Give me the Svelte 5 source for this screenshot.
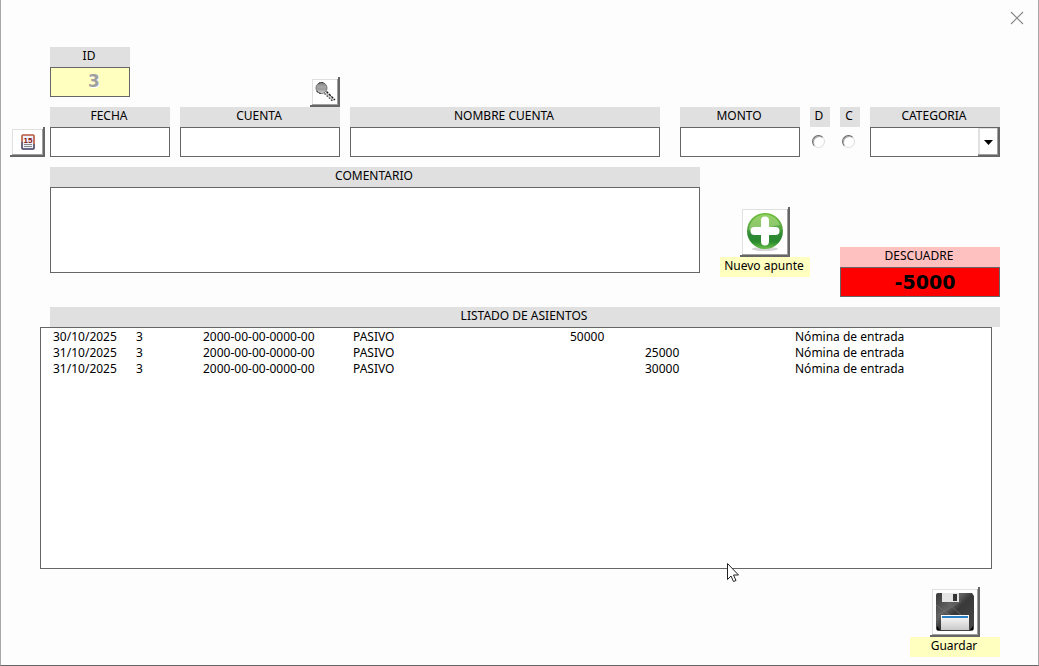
<script lang="ts">
	type Entry = {
		date: string;
		id: number;
		account: string;
		name: string;
		debit: string;
		credit: string;
		comment: string;
	};

	const entries: Entry[] = [
		{ date: '30/10/2025', id: 3, account: '2000-00-00-0000-00', name: 'PASIVO', debit: '50000', credit: '', comment: 'Nómina de entrada' },
		{ date: '31/10/2025', id: 3, account: '2000-00-00-0000-00', name: 'PASIVO', debit: '', credit: '25000', comment: 'Nómina de entrada' },
		{ date: '31/10/2025', id: 3, account: '2000-00-00-0000-00', name: 'PASIVO', debit: '', credit: '30000', comment: 'Nómina de entrada' },
	];

	let fecha = $state('');
	let cuenta = $state('');
	let nombre = $state('');
	let monto = $state('');
	let tipo = $state('');
	let categoria = $state('');
	let comentario = $state('');
</script>

<main class="window">
	<header>
		<button class="close" type="button" aria-label="Cerrar">
			<svg width="14" height="14" viewBox="0 0 14 14">
				<path d="M1 1L13 13M13 1L1 13" stroke="#858585" stroke-width="1.1" />
			</svg>
		</button>
	</header>

	<section class="fields">
		<div class="field id">
			<label for="id">ID</label>
			<input id="id" value="3" readonly />
		</div>

		<button class="raised search" type="button" aria-label="Buscar cuenta">
			<svg width="22" height="22" viewBox="0 0 22 22">
				<defs>
					<linearGradient id="lens" x1="0" y1="0" x2="0" y2="1">
						<stop offset="0" stop-color="#808080" />
						<stop offset="0.4" stop-color="#a8a8a8" />
						<stop offset="0.6" stop-color="#999" />
						<stop offset="1" stop-color="#dcdcdc" />
					</linearGradient>
				</defs>
				<path d="M11 12.5L12.500 11L20.500 18.500L19 20.500Z" fill="#c8c8c8" />
				<path d="M12.500 10.500L21 19" stroke="#111" stroke-width="1.2" stroke-dasharray="2.5 1" />
				<path d="M10.500 12.500L19 20.500" stroke="#333" stroke-width="1.2" stroke-dasharray="1.5 1.5" />
				<circle cx="7.500" cy="7" r="5.500" fill="url(#lens)" stroke="#777" />
				<path d="M4.500 2.500Q7.500 0.500 10.500 2.500M2.500 10Q4.500 12.500 7.500 12.500" stroke="#222" fill="none" stroke-dasharray="2 1" />
			</svg>
		</button>

		<button class="raised calendar" type="button" aria-label="Elegir fecha">
			<svg width="14" height="16" viewBox="0 0 14 16">
				<rect x="1" y="1" width="12" height="14" rx="1" fill="#edf3fa" stroke="#b8563c" stroke-width="1.6" />
				<path d="M1 8V14Q1 15 2 15H12Q13 15 13 14V10" fill="none" stroke="#4a5c8c" stroke-width="1.4" />
				<text x="7" y="8.5" text-anchor="middle">15</text>
				<path d="M3 10.500H11M3 12.500H11" stroke="#888" />
			</svg>
		</button>

		<div class="field">
			<label for="fecha">FECHA</label>
			<input id="fecha" bind:value={fecha} />
		</div>
		<div class="field">
			<label for="cuenta">CUENTA</label>
			<input id="cuenta" bind:value={cuenta} />
		</div>
		<div class="field nombre">
			<label for="nombre">NOMBRE CUENTA</label>
			<input id="nombre" bind:value={nombre} />
		</div>
		<div class="field">
			<label for="monto">MONTO</label>
			<input id="monto" bind:value={monto} />
		</div>
		<div class="option">
			<label for="debe">D</label>
			<input id="debe" type="radio" name="tipo" value="D" bind:group={tipo} />
		</div>
		<div class="option">
			<label for="credito">C</label>
			<input id="credito" type="radio" name="tipo" value="C" bind:group={tipo} />
		</div>
		<div class="field">
			<label for="categoria">CATEGORIA</label>
			<div class="combo">
				<select id="categoria" bind:value={categoria}>
					<option value=""></option>
				</select>
				<span class="arrow">
					<svg width="9" height="5" viewBox="0 0 9 5"><path d="M0 0H9L4.5 5Z" /></svg>
				</span>
			</div>
		</div>
	</section>

	<section class="middle">
		<div class="field comment">
			<label for="comentario">COMENTARIO</label>
			<textarea id="comentario" bind:value={comentario}></textarea>
		</div>

		<div class="action new">
			<button class="raised" type="button" aria-labelledby="new-label">
				<svg width="38" height="40" viewBox="0 0 38 40">
					<defs>
						<linearGradient id="green" x1="0" y1="0" x2="0" y2="1">
							<stop offset="0" stop-color="#6fbf3a" />
							<stop offset="0.4" stop-color="#5aa845" />
							<stop offset="0.6" stop-color="#2f8a35" />
							<stop offset="0.8" stop-color="#2a8a2c" />
							<stop offset="1" stop-color="#6cc04c" />
						</linearGradient>
					</defs>
					<ellipse cx="19" cy="37" rx="13" ry="2" fill="#d5d5d5" />
					<circle cx="19" cy="19" r="18" fill="url(#green)" />
					<path d="M3 18A16 16 0 0 1 34 13Q25 14 19 18T3 18Z" fill="#c8eba0" opacity="0.45" />
					<path d="M19 8.500V29.500M8.500 19H29.500" stroke="#fff" stroke-width="8" stroke-linecap="round" />
				</svg>
			</button>
			<span id="new-label">Nuevo apunte</span>
		</div>

		<div class="field balance">
			<label for="descuadre">DESCUADRE</label>
			<input id="descuadre" value="-5000" readonly />
		</div>
	</section>

	<section class="list">
		<h2>LISTADO DE ASIENTOS</h2>
		<div class="list-box">
			<table>
				<colgroup>
					<col class="c-date" />
					<col class="c-id" />
					<col class="c-account" />
					<col class="c-name" />
					<col class="c-debit" />
					<col class="c-credit" />
					<col />
				</colgroup>
				<tbody>
					{#each entries as entry}
						<tr>
							<td>{entry.date}</td>
							<td>{entry.id}</td>
							<td>{entry.account}</td>
							<td>{entry.name}</td>
							<td>{entry.debit}</td>
							<td>{entry.credit}</td>
							<td>{entry.comment}</td>
						</tr>
					{/each}
				</tbody>
			</table>
		</div>
	</section>

	<footer>
		<div class="action">
			<button class="raised" type="button" aria-labelledby="save-label">
				<svg width="38" height="38" viewBox="0 0 38 38">
					<defs>
						<linearGradient id="disk" x1="0" y1="0" x2="1" y2="1">
							<stop offset="0" stop-color="#3a3a3a" />
							<stop offset="0.35" stop-color="#626262" />
							<stop offset="0.5" stop-color="#393939" />
							<stop offset="1" stop-color="#484848" />
						</linearGradient>
						<linearGradient id="paper" x1="0" y1="0" x2="0" y2="1">
							<stop offset="0" stop-color="#fff" />
							<stop offset="1" stop-color="#c9c9c9" />
						</linearGradient>
					</defs>
					<path d="M2 0H36L38 3V35Q38 38 35 38H3Q0 38 0 35V2Q0 0 2 0Z" fill="url(#disk)" />
					<path d="M0 12L16 24M2 22L25 8M12 10L25 22" stroke="#727272" stroke-width="0.7" />
					<rect x="6" y="0" width="17" height="9" fill="#e5e5e5" />
					<rect x="17" y="1" width="4" height="7" fill="#333" />
					<rect x="5" y="22" width="28" height="15" fill="url(#paper)" />
					<path d="M6 24H32" stroke="#2b7fc4" stroke-width="2" />
					<path d="M1 33L4 37H1ZM37 33L34 37H37Z" fill="#000" />
				</svg>
			</button>
			<span id="save-label">Guardar</span>
		</div>
	</footer>

	<svg class="cursor" width="12" height="19" viewBox="0 0 12 19">
		<path d="M0.500 0.500V16.500L4 13L6.500 18.500L9 17.500L6.500 12H11.500Z" fill="#fff" stroke="#222" />
	</svg>
</main>

<style>
	:global(body) {
		margin: 0;
		background: #fdfdfd;
	}

	.window,
	.window * {
		box-sizing: border-box;
	}

	.window {
		position: relative;
		display: flex;
		flex-direction: column;
		min-height: 100vh;
		padding: 0 38px 8px 9px;
		border: 1px solid #a8a8a8;
		border-top: 0;
		border-bottom-color: #666;
		background: #fdfdfd;
		color: #000;
		font: 12px/16px 'Noto Sans', sans-serif;
	}

	header {
		display: flex;
		justify-content: flex-end;
		height: 47px;
		margin-right: -27px;
		padding-top: 8px;
	}

	.close {
		display: grid;
		place-items: center;
		width: 20px;
		height: 20px;
		padding: 0;
		border: 0;
		background: none;
	}

	.fields {
		display: grid;
		grid-template-columns: 30px 120px 160px 1fr 120px 20px 20px 130px;
		grid-template-rows: 60px 50px;
		column-gap: 10px;
	}

	.field {
		display: flex;
		flex-direction: column;
		min-width: 0;
	}

	label,
	h2,
	.action span {
		display: block;
		height: 20px;
		margin: 0;
		padding: 0 2px 2px 0;
		background: #e0e0e0;
		font-size: 12px;
		font-weight: normal;
		line-height: 18px;
		text-align: center;
	}

	.field input,
	select,
	textarea {
		width: 100%;
		height: 30px;
		margin: 0;
		padding: 0 4px;
		border: 1px solid #666;
		border-radius: 0;
		outline: 0;
		background: #fff;
		color: #000;
		font: inherit;
	}

	textarea {
		display: block;
		height: 86px;
		resize: none;
	}

	.id {
		grid-column: 2;
		width: 80px;
	}

	.id input {
		padding: 0 4px 2px 12px;
		background: #ffffc0;
		color: #a0a0a0;
		font: bold 17px 'DejaVu Sans', sans-serif;
		text-align: center;
		text-shadow: 1px 1px 0 #fff;
	}

	.raised {
		display: grid;
		place-items: center;
		width: 50px;
		height: 50px;
		padding: 0;
		border: 0;
		background: #fff;
		box-shadow:
			inset -2px -2px 0 #666,
			inset 2px 2px 0 #fdfdfd,
			inset -3px -3px 0 #a0a0a0,
			inset 3px 3px 0 #e0e0e0;
	}

	.search {
		grid-column: 3;
		align-self: end;
		justify-self: end;
		width: 30px;
		height: 30px;
	}

	.calendar {
		grid-column: 1;
		align-self: end;
		width: 35px;
		height: 30px;
	}

	.calendar text {
		fill: #8b1010;
		font: bold 8px 'Liberation Sans', sans-serif;
	}

	.nombre {
		margin-right: 10px;
	}

	.option {
		display: flex;
		flex-direction: column;
	}

	.option input {
		appearance: none;
		width: 13px;
		height: 13px;
		margin: 8px 0 0 2px;
		border: 1px solid;
		border-color: #666 #ddd #ddd #666;
		border-radius: 50%;
		background: #fff;
		box-shadow: inset 1px 1px 0 #aaa;
	}

	.option input:checked {
		background: radial-gradient(#000 0 2px, #fff 3px);
	}

	.combo {
		position: relative;
	}

	select {
		display: block;
		appearance: none;
	}

	.arrow {
		position: absolute;
		top: 1px;
		right: 0;
		bottom: 0;
		display: grid;
		place-items: center;
		width: 22px;
		padding-right: 2px;
		background: #fff;
		box-shadow:
			inset -2px -2px 0 #666,
			inset -3px -3px 0 #a0a0a0,
			inset 2px 1px 0 #e0e0e0;
		pointer-events: none;
	}

	.middle {
		display: flex;
		align-items: flex-end;
		height: 130px;
		margin: 10px 0 10px 40px;
	}

	.comment {
		flex: 1;
		align-self: flex-start;
	}

	.action {
		width: 90px;
	}

	.action .raised {
		margin-left: 20px;
	}

	.action span {
		background: #ffffc0;
	}

	.new {
		margin: 0 30px 20px 20px;
	}

	.balance {
		width: 160px;
	}

	.balance label {
		background: #ffc0c0;
	}

	.balance input {
		padding-left: 14px;
		background: #f00;
		font: bold 19px 'DejaVu Sans', sans-serif;
		text-align: center;
	}

	.list {
		display: flex;
		flex: 1;
		flex-direction: column;
	}

	h2 {
		margin-left: 40px;
	}

	.list-box {
		flex: 1;
		margin: 0 8px 0 30px;
		padding: 1px 0 0 9px;
		border: 1px solid #666;
		background: #fff;
	}

	table {
		width: 100%;
		border-collapse: collapse;
		table-layout: fixed;
	}

	td {
		height: 16px;
		padding: 0 0 0 3px;
		white-space: nowrap;
	}

	.c-date {
		width: 83px;
	}

	.c-id {
		width: 67px;
	}

	.c-account {
		width: 150px;
	}

	.c-name {
		width: 217px;
	}

	.c-debit {
		width: 75px;
	}

	.c-credit {
		width: 150px;
	}

	footer {
		display: flex;
		justify-content: flex-end;
		margin-top: 18px;
	}

	.cursor {
		position: absolute;
		top: 563px;
		left: 726px;
		pointer-events: none;
	}
</style>
